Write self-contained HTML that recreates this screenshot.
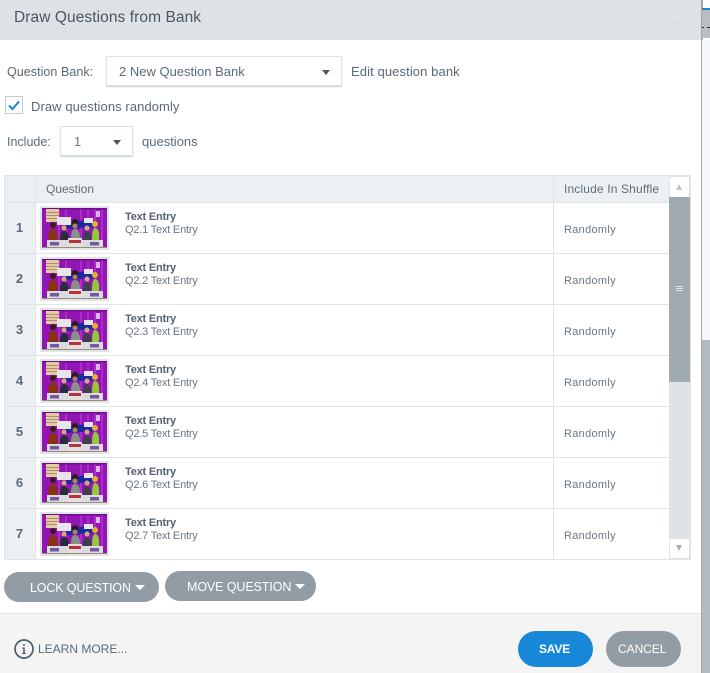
<!DOCTYPE html>
<html><head><meta charset="utf-8"><style>
html,body{margin:0;padding:0;width:710px;height:673px;overflow:hidden;background:#fff}
body{position:relative;font-family:"Liberation Sans",sans-serif;color:#5a6a78;font-size:13px}
.a{position:absolute;white-space:nowrap}
.b{position:absolute}
.sel{position:absolute;background:#fff;border:1px solid #dde2e6;box-shadow:0 1px 1px #c6cfd6;box-sizing:border-box}
.tri{position:absolute;width:0;height:0;border-left:4px solid transparent;border-right:4px solid transparent;border-top:5px solid #4a5560}
.triw{position:absolute;width:0;height:0;border-left:5px solid transparent;border-right:5px solid transparent;border-top:5px solid #fff}
.num{position:absolute;left:4px;width:31px;text-align:center;font-weight:bold;font-size:13px;color:#5a6b7a}
.t1{position:absolute;left:125px;font-weight:bold;font-size:11px;color:#56636f;letter-spacing:-.2px}
.t2{position:absolute;left:125px;font-size:11px;color:#6a7783;letter-spacing:-.2px}
.t3{position:absolute;left:564px;font-size:11px;color:#6a7783;letter-spacing:.3px}
.th{position:absolute;left:40px;width:69px;height:44px;box-sizing:border-box;border:2px solid #dfe4e7;background:#fff}
.th svg{display:block;width:65px;height:40px}
.btn{position:absolute;border-radius:15px;background:#929ca4;color:#fff;text-align:center}
</style></head><body>
<svg width="0" height="0" style="position:absolute"><defs>
<filter id="s" x="0" y="0" width="100%" height="100%"><feGaussianBlur stdDeviation=".35"/></filter>
<symbol id="q" viewBox="0 0 65 40">
<g filter="url(#s)">
<rect width="65" height="40" fill="#9212b4"/>
<g fill="#ad2bcb"><rect x="16" width="2" height="32"/><rect x="23" width="2" height="32"/><rect x="38" width="2" height="32"/><rect x="45" width="2" height="32"/><rect x="52" width="2" height="32"/><rect x="59" width="2" height="32"/></g>
<rect x="0" width="65" height="1.5" fill="#6e0f88"/>
<rect x="4" y="1" width="13" height="13" fill="#e3c9a6"/>
<g fill="#b08c70"><rect x="4" y="4" width="13" height="1"/><rect x="4" y="7" width="13" height="1"/><rect x="4" y="10" width="13" height="1"/></g>
<path d="M24 17 Q40 10 53 14 L53 19 L24 21Z" fill="#1c2a9e"/>
<rect x="15" y="9" width="14" height="8" fill="#e6e5ea"/>
<rect x="42" y="10" width="9" height="5" fill="#e6e5ea"/>
<rect x="54" y="3" width="4" height="6" fill="#d9b7e8"/>
<circle cx="11" cy="17" r="3" fill="#3a1e12"/><path d="M6 32 Q6 21 11 21 Q16 21 16 32Z" fill="#8a3018"/>
<circle cx="22" cy="20" r="2.5" fill="#d9a57c"/><path d="M18 32 Q18 23 22 23 Q27 23 27 32Z" fill="#262f3c"/>
<circle cx="33" cy="14" r="3" fill="#2a1a18"/><circle cx="33" cy="18" r="2.5" fill="#b98058"/><path d="M29 30 Q29 21 33 21 Q38 21 38 30Z" fill="#8a9086"/>
<circle cx="45" cy="20" r="2.5" fill="#d8a886"/><path d="M41 32 Q41 23 45 23 Q49 23 49 32Z" fill="#3a4048"/>
<circle cx="53" cy="16" r="3" fill="#e0b12c"/><path d="M50 32 Q50 20 53 20 Q58 20 57 32Z" fill="#93c936"/>
<rect x="5" y="32" width="21" height="8" fill="#d9dbde"/><rect x="40" y="32" width="21" height="8" fill="#d9dbde"/>
<rect x="26" y="30" width="14" height="10" fill="#e1e1e4"/><rect x="27" y="32" width="12" height="3" fill="#b8323c"/>
<rect x="8" y="34" width="9" height="3.5" fill="#7458a4"/><rect x="48" y="34" width="9" height="3.5" fill="#7458a4"/>
<rect y="39" width="65" height="1" fill="#a08a76"/>
</g>
</symbol></defs></svg>

<!-- right strip -->
<div class="b" style="left:701px;top:0;width:2px;height:673px;background:#a4a8ac"></div>
<div class="b" style="left:702px;top:8px;width:8px;height:2px;background:#1a86d8"></div>
<div class="b" style="left:702px;top:10px;width:8px;height:28px;background:#b9bec2"></div>
<div class="b" style="left:702px;top:27px;width:2px;height:1px;background:#333"></div><div class="b" style="left:707px;top:27px;width:3px;height:1px;background:#333"></div>
<div class="b" style="left:702px;top:40px;width:8px;height:300px;background:#f5f6fb"></div>
<div class="b" style="left:702px;top:340px;width:8px;height:333px;background:#b2b9bf"></div>

<!-- header -->
<div class="b" style="left:0;top:0;width:701px;height:40px;background:#dee2e5"></div>
<div class="a" style="left:14px;top:9px;font-size:15.5px;color:#4a5661;letter-spacing:.08px">Draw Questions from Bank</div>
<div class="a" style="left:671px;top:10px;font-size:12px;color:#e6e9eb">✕</div>

<!-- form -->
<div class="a" style="left:7px;top:65px;font-size:12.5px;line-height:14px;letter-spacing:.05px">Question Bank:</div>
<div class="sel" style="left:106px;top:56px;width:236px;height:30px"></div>
<div class="a" style="left:119px;top:64px">2 New Question Bank</div>
<div class="tri" style="left:322px;top:70px"></div>
<div class="a" style="left:351px;top:64px;letter-spacing:.1px">Edit question bank</div>

<div class="b" style="left:5px;top:96px;width:18px;height:18px;box-sizing:border-box;border:1px solid #c4ccd3;background:#fff"></div>
<svg class="b" style="left:5px;top:96px" width="18" height="18" viewBox="0 0 18 18"><path d="M4 9.5 L7.5 13 L14 5.5" fill="none" stroke="#1a86d8" stroke-width="2"/></svg>
<div class="a" style="left:31px;top:99px;letter-spacing:.08px">Draw questions randomly</div>

<div class="a" style="left:7px;top:135px;font-size:12.5px;line-height:14px">Include:</div>
<div class="sel" style="left:60px;top:126px;width:73px;height:30px"></div>
<div class="a" style="left:74px;top:134px;color:#75757a">1</div>
<div class="tri" style="left:113px;top:140px"></div>
<div class="a" style="left:142px;top:134px">questions</div>

<!-- table -->
<div class="b" style="left:4px;top:175px;width:687px;height:385px;box-sizing:border-box;border:1px solid #e0e4e7"></div>
<div class="b" style="left:5px;top:176px;width:664px;height:26px;background:#edf0f3"></div>
<div class="b" style="left:5px;top:203px;width:30px;height:356px;background:#edf0f3"></div>
<div class="b" style="left:35px;top:176px;width:1px;height:383px;background:#e0e4e7"></div>
<div class="b" style="left:553px;top:176px;width:1px;height:383px;background:#e0e4e7"></div>
<div class="b" style="left:5px;top:202px;width:664px;height:1px;background:#e0e4e7"></div>
<div class="b" style="left:5px;top:253px;width:664px;height:1px;background:#e0e4e7"></div>
<div class="b" style="left:5px;top:304px;width:664px;height:1px;background:#e0e4e7"></div>
<div class="b" style="left:5px;top:355px;width:664px;height:1px;background:#e0e4e7"></div>
<div class="b" style="left:5px;top:406px;width:664px;height:1px;background:#e0e4e7"></div>
<div class="b" style="left:5px;top:457px;width:664px;height:1px;background:#e0e4e7"></div>
<div class="b" style="left:5px;top:508px;width:664px;height:1px;background:#e0e4e7"></div>
<div class="a" style="left:46px;top:182px;font-size:12px;color:#5f6e7b">Question</div>
<div class="a" style="left:564px;top:182px;font-size:12px;color:#5f6e7b;letter-spacing:.15px">Include In Shuffle</div>

<div class="num" style="top:220px">1</div><div class="th" style="top:206px"><svg><use href="#q"/></svg></div><div class="t1" style="top:211px">Text Entry</div><div class="t2" style="top:224px">Q2.1 Text Entry</div><div class="t3" style="top:224px">Randomly</div>
<div class="num" style="top:271px">2</div><div class="th" style="top:257px"><svg><use href="#q"/></svg></div><div class="t1" style="top:262px">Text Entry</div><div class="t2" style="top:275px">Q2.2 Text Entry</div><div class="t3" style="top:275px">Randomly</div>
<div class="num" style="top:322px">3</div><div class="th" style="top:308px"><svg><use href="#q"/></svg></div><div class="t1" style="top:313px">Text Entry</div><div class="t2" style="top:326px">Q2.3 Text Entry</div><div class="t3" style="top:326px">Randomly</div>
<div class="num" style="top:373px">4</div><div class="th" style="top:359px"><svg><use href="#q"/></svg></div><div class="t1" style="top:364px">Text Entry</div><div class="t2" style="top:377px">Q2.4 Text Entry</div><div class="t3" style="top:377px">Randomly</div>
<div class="num" style="top:424px">5</div><div class="th" style="top:410px"><svg><use href="#q"/></svg></div><div class="t1" style="top:415px">Text Entry</div><div class="t2" style="top:428px">Q2.5 Text Entry</div><div class="t3" style="top:428px">Randomly</div>
<div class="num" style="top:475px">6</div><div class="th" style="top:461px"><svg><use href="#q"/></svg></div><div class="t1" style="top:466px">Text Entry</div><div class="t2" style="top:479px">Q2.6 Text Entry</div><div class="t3" style="top:479px">Randomly</div>
<div class="num" style="top:526px">7</div><div class="th" style="top:512px"><svg><use href="#q"/></svg></div><div class="t1" style="top:517px">Text Entry</div><div class="t2" style="top:530px">Q2.7 Text Entry</div><div class="t3" style="top:530px">Randomly</div>

<!-- scrollbar -->
<div class="b" style="left:669px;top:176px;width:21px;height:383px;background:#dfe3e8"></div>
<div class="b" style="left:670px;top:177px;width:19px;height:20px;background:#fff"></div>
<div class="b" style="left:669px;top:197px;width:21px;height:185px;background:#a0abb0"></div>
<div class="b" style="left:676px;top:286px;width:7px;height:1px;background:#dfe3e8"></div>
<div class="b" style="left:676px;top:288px;width:7px;height:1px;background:#dfe3e8"></div>
<div class="b" style="left:676px;top:290px;width:7px;height:1px;background:#dfe3e8"></div>
<div class="b" style="left:670px;top:539px;width:19px;height:19px;background:#fff"></div>
<div class="b" style="left:676px;top:184px;width:0;height:0;border-left:3.5px solid transparent;border-right:3.5px solid transparent;border-bottom:6px solid #bcc4ca"></div>
<div class="b" style="left:676px;top:545px;width:0;height:0;border-left:3.5px solid transparent;border-right:3.5px solid transparent;border-top:6px solid #a8b0b6"></div>

<!-- buttons -->
<div class="btn" style="left:4px;top:572px;width:155px;height:30px"></div>
<div class="a" style="left:30px;top:581px;font-size:12.5px;color:#fff;letter-spacing:-.15px">LOCK QUESTION</div>
<div class="triw" style="left:135px;top:585px"></div>
<div class="btn" style="left:165px;top:571px;width:151px;height:30px"></div>
<div class="a" style="left:187px;top:580px;font-size:12.5px;color:#fff;letter-spacing:-.1px">MOVE QUESTION</div>
<div class="triw" style="left:295px;top:584px"></div>

<!-- footer -->
<div class="b" style="left:0;top:613px;width:701px;height:60px;background:#f4f4f4;border-top:1px solid #e2e4e6;box-sizing:border-box"></div>
<svg class="b" style="left:14px;top:639px" width="20" height="20" viewBox="0 0 20 20"><circle cx="10" cy="10" r="9" fill="none" stroke="#4f6069" stroke-width="1.7"/><rect x="9.2" y="8.5" width="1.6" height="6" fill="#4f6069"/><rect x="9.2" y="5" width="1.6" height="1.8" fill="#4f6069"/><rect x="8" y="14" width="4" height="1" fill="#4f6069"/><rect x="8" y="8.5" width="2" height="1" fill="#4f6069"/></svg>
<div class="a" style="left:38px;top:642px;font-size:12px;color:#5a6a78">LEARN MORE...</div>
<div class="btn" style="left:518px;top:631px;width:75px;height:36px;border-radius:18px;background:#1787d8"></div>
<div class="a" style="left:539px;top:642px;font-size:12px;font-weight:bold;color:#fff;letter-spacing:-.2px">SAVE</div>
<div class="btn" style="left:606px;top:631px;width:75px;height:36px;border-radius:18px"></div>
<div class="a" style="left:618px;top:642px;font-size:12px;color:#fff;letter-spacing:-.05px">CANCEL</div>
</body></html>
